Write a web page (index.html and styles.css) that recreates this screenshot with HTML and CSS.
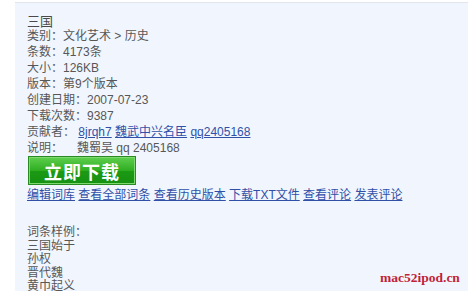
FILE: index.html
```html
<!DOCTYPE html>
<html>
<head>
<meta charset="utf-8">
<link rel="stylesheet" href="styles.css">
</head>
<body>
<div class="panel">
  <div class="title">三国</div>
  <div class="row">类别：文化艺术 &gt; 历史</div>
  <div class="row">条数：4173条</div>
  <div class="row">大小：126KB</div>
  <div class="row">版本：第9个版本</div>
  <div class="row">创建日期：2007-07-23</div>
  <div class="row">下载次数：9387</div>
  <div class="row">贡献者： <a href="#">8jrqh7</a> <a href="#">魏武中兴名臣</a> <a href="#">qq2405168</a></div>
  <div class="row"><span class="label">说明：</span>魏蜀吴 qq 2405168</div>
  <a class="btn" href="#">立即下载</a>
  <div class="links"><a href="#">编辑词库</a> <a href="#">查看全部词条</a> <a href="#">查看历史版本</a> <a href="#">下载TXT文件</a> <a href="#">查看评论</a> <a href="#">发表评论</a></div>
  <div class="samples">
    <div>词条样例：</div>
    <div>三国始于</div>
    <div>孙权</div>
    <div>晋代魏</div>
    <div>黄巾起义</div>
  </div>
  <div class="mark">mac52ipod.cn</div>
</div>
</body>
</html>
```
FILE: styles.css
```css
html, body {
  margin: 0;
  padding: 0;
  background: #ffffff;
  overflow: hidden;
}
.panel {
  position: relative;
  box-sizing: border-box;
  margin: 2px 1px 0 15px;
  height: 289px;
  overflow: hidden;
  border-top: 1px solid #e2e6ec;
  background: #f1f6fe;
  padding: 12px 0 0 12px;
  font-family: "Liberation Sans", "Noto Sans CJK SC", sans-serif;
  font-size: 12px;
  color: #575757;
}
.title {
  font-size: 13px;
  line-height: 13px;
  color: #4a4a4a;
}
.row {
  line-height: 16px;
  height: 16px;
  white-space: nowrap;
}
.label {
  display: inline-block;
  width: 50px;
}
a {
  color: #3050a8;
  text-decoration: underline;
}
.btn {
  display: flex;
  align-items: center;
  justify-content: center;
  box-sizing: border-box;
  width: 108px;
  height: 29px;
  margin-left: 1px;
  border: 1px solid #2a8a22;
  box-shadow: inset 0 0 0 1px #7fd870;
  background: linear-gradient(#5fcf4e, #2fae22 50%, #1c9a14 51%, #169012);
  color: #ffffff;
  font-size: 18px;
  font-weight: bold;
  letter-spacing: 1px;
  text-decoration: none;
}
.links {
  margin-top: 2px;
  line-height: 16px;
  white-space: nowrap;
}
.samples {
  margin-top: 23px;
  line-height: 13.5px;
}
.mark {
  position: absolute;
  left: 365px;
  top: 267px;
  font-family: "Liberation Serif", serif;
  font-weight: bold;
  font-size: 13.5px;
  color: #c21f3a;
}
```
